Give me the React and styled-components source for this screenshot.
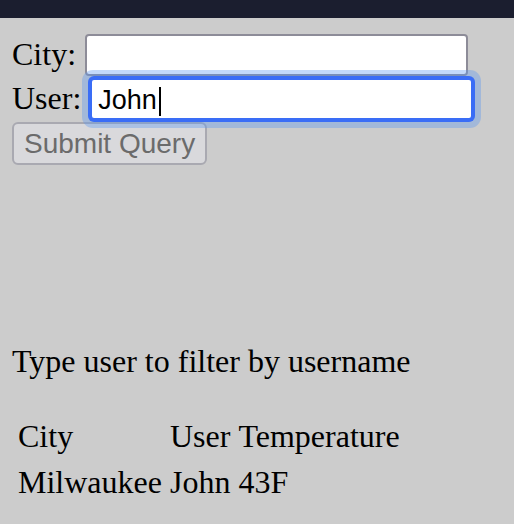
import React from "react";
import styled, { createGlobalStyle } from "styled-components";

const GlobalStyle = createGlobalStyle`
  html, body {
    margin: 0;
    padding: 0;
    background: #cccccc;
  }
  body {
    font-family: "Liberation Serif", "Times New Roman", serif;
    font-size: 32px;
    color: #000;
  }
`;

const TopBar = styled.div`
  height: 18px;
  background: #1b1e2f;
`;

const Page = styled.div`
  padding: 16px 12px 0 12px;
`;

const Form = styled.form`
  display: flex;
  flex-direction: column;
  align-items: flex-start;
  gap: 2px;
  margin: 0;
`;

const Row = styled.div`
  display: flex;
  align-items: baseline;
  gap: 9px;
  line-height: 38px;
`;

const Label = styled.label`
  font-family: "Liberation Serif", "Times New Roman", serif;
  font-size: 32px;
`;

const FieldWrap = styled.span`
  position: relative;
  display: inline-block;
`;

const TextInput = styled.input`
  box-sizing: border-box;
  width: 383px;
  height: 42px;
  margin: 0;
  padding: 5px 6px 2px 6px;
  border: 2px solid ${(p) => (p.$focused ? "#3a6df6" : "#8d8c98")};
  border-radius: 4px;
  background: #ffffff;
  font-family: "Liberation Sans", Arial, sans-serif;
  font-size: 27px;
  color: #000;
  outline: none;
  caret-color: transparent;
  box-shadow: ${(p) =>
    p.$focused
      ? "0 0 0 2px #3a6df6, 0 0 0 8px rgba(90, 150, 240, 0.36)"
      : "none"};
`;

const Caret = styled.span`
  position: absolute;
  left: ${(p) => p.$left}px;
  top: 9px;
  width: 2px;
  height: 29px;
  background: #000;
`;

const SubmitButton = styled.button`
  box-sizing: border-box;
  height: 43px;
  margin: 0;
  padding: 0 10px 0 10px;
  border: 2px solid #a9a9b1;
  border-radius: 6px;
  background: #d9d9dc;
  color: #6b6b6b;
  font-family: "Liberation Sans", Arial, sans-serif;
  font-size: 28px;
  line-height: 1;
`;

const Hint = styled.p`
  margin: 177px 0 31px 0;
  line-height: 38px;
`;

const ResultsTable = styled.table`
  border-spacing: 4px;
  margin-left: 0;
  font-size: 32px;
  line-height: 38px;
`;

const Cell = styled.td`
  padding: 2px;
  text-align: left;
  white-space: nowrap;
`;

const rows = [{ city: "Milwaukee", user: "John", temp: "43F" }];

export default function App() {
  return (
    <>
      <GlobalStyle />
      <TopBar />
      <Page>
        <Form onSubmit={(e) => e.preventDefault()}>
          <Row>
            <Label htmlFor="city">City:</Label>
            <TextInput id="city" type="text" defaultValue="" />
          </Row>
          <Row>
            <Label htmlFor="user">User:</Label>
            <FieldWrap>
              <TextInput id="user" type="text" defaultValue="John" $focused />
              <Caret $left={69} />
            </FieldWrap>
          </Row>
          <SubmitButton type="submit">Submit Query</SubmitButton>
        </Form>
        <Hint>Type user to filter by username</Hint>
        <ResultsTable>
          <tbody>
            <tr>
              <Cell>City</Cell>
              <Cell>User</Cell>
              <Cell>Temperature</Cell>
            </tr>
            {rows.map((r) => (
              <tr key={r.city + r.user}>
                <Cell>{r.city}</Cell>
                <Cell>{r.user}</Cell>
                <Cell>{r.temp}</Cell>
              </tr>
            ))}
          </tbody>
        </ResultsTable>
      </Page>
    </>
  );
}
